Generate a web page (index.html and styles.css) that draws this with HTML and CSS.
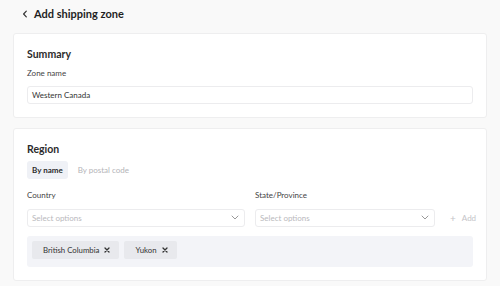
FILE: index.html
```html
<!DOCTYPE html>
<html>
<head>
<meta charset="utf-8">
<link rel="stylesheet" href="styles.css">
</head>
<body>
<div class="page">
  <header class="header">
    <svg class="back" width="6" height="8" viewBox="0 0 6 8"><path d="M4.3 1.2 L1.6 4 L4.3 6.8" fill="none" stroke="#333" stroke-width="1.2" stroke-linecap="round" stroke-linejoin="round"/></svg>
    <h1 class="title">Add shipping zone</h1>
  </header>

  <section class="card">
    <h2 class="card-title">Summary</h2>
    <label class="label">Zone name</label>
    <div class="input">Western Canada</div>
  </section>

  <section class="card">
    <h2 class="card-title">Region</h2>
    <div class="tabs">
      <span class="tab active">By name</span>
      <span class="tab">By postal code</span>
    </div>
    <div class="fields">
      <div class="field">
        <label class="label">Country</label>
        <div class="input select"><span class="placeholder">Select options</span>
          <svg class="chev" width="8" height="5" viewBox="0 0 8 5"><path d="M1 1 L4 4 L7 1" fill="none" stroke="#999" stroke-width="1" stroke-linecap="round" stroke-linejoin="round"/></svg>
        </div>
      </div>
      <div class="field">
        <label class="label">State/Province</label>
        <div class="input select"><span class="placeholder">Select options</span>
          <svg class="chev" width="8" height="5" viewBox="0 0 8 5"><path d="M1 1 L4 4 L7 1" fill="none" stroke="#999" stroke-width="1" stroke-linecap="round" stroke-linejoin="round"/></svg>
        </div>
      </div>
      <div class="add"><span class="plus">+</span>Add</div>
    </div>
    <div class="tags">
      <span class="tag">British Columbia<svg class="x" width="6" height="6" viewBox="0 0 6 6"><path d="M1 1 L5 5 M5 1 L1 5" stroke="#333" stroke-width="1.3" stroke-linecap="round"/></svg></span>
      <span class="tag">Yukon<svg class="x" width="6" height="6" viewBox="0 0 6 6"><path d="M1 1 L5 5 M5 1 L1 5" stroke="#333" stroke-width="1.3" stroke-linecap="round"/></svg></span>
    </div>
  </section>
</div>
</body>
</html>
```
FILE: styles.css
```css
* { box-sizing: border-box; }
html, body { margin: 0; padding: 0; }
body {
  background: #f9f9f9;
  font-family: Lato, "Open Sans", sans-serif;
  color: #333;
  width: 500px;
  height: 286px;
  overflow: hidden;
}
.page { padding: 0 13px; }
.header {
  height: 27px;
  display: flex;
  align-items: center;
  padding-left: 9px;
  gap: 6px;
  margin-bottom: 6px;
}
.back { display: block; }
.title {
  margin: 0;
  font-size: 11px;
  font-weight: 700;
  color: #1f1f1f;
  line-height: 16px;
}
.card {
  background: #fff;
  border: 1px solid #eeeeef;
  border-radius: 3px;
  padding: 13px 13px 13px;
  margin-bottom: 10px;
}
.card-title {
  margin: 0;
  font-size: 10.5px;
  font-weight: 700;
  line-height: 14px;
  color: #2b2b2b;
}
.label {
  display: block;
  font-size: 8px;
  line-height: 12px;
  color: #444;
  margin-top: 6px;
  margin-bottom: 7px;
}
.input {
  height: 18px;
  border: 1px solid #ececee;
  border-radius: 3px;
  padding: 0 4px;
  font-size: 8px;
  line-height: 16px;
  color: #333;
  display: flex;
  align-items: center;
}
.select { justify-content: space-between; padding-right: 5px; }
.placeholder { color: #b9b9bd; }
.chev { display: block; }
.tabs { display: flex; gap: 5px; margin-top: 5px; }
.tab {
  height: 18px;
  padding: 0 5px;
  border-radius: 3px;
  font-size: 8px;
  line-height: 18px;
  color: #b4b4b8;
}
.tab.active { background: #eff1f6; color: #2b2b2b; font-weight: 700; }
.fields {
  display: grid;
  grid-template-columns: 218fr 180fr 28px;
  column-gap: 10px;
  align-items: end;
  margin-top: 4px;
}
.fields .label { margin-top: 6px; margin-bottom: 7.5px; }
.add {
  height: 18px;
  display: flex;
  align-items: center;
  gap: 6px;
  padding-left: 5px;
  font-size: 8px;
  color: #c4c4c8;
  white-space: nowrap;
}
.plus { font-size: 10px; }
.tags {
  margin-top: 9.5px;
  background: #f3f4f8;
  border-radius: 3px;
  padding: 5px;
  display: flex;
  gap: 5px;
  height: 31px;
}
.tag {
  height: 18px;
  background: #e8e9ed;
  border-radius: 2px;
  display: flex;
  align-items: center;
  gap: 5px;
  padding: 0 9px 0 11px;
  font-size: 7.8px;
  color: #333;
}
.x { display: block; }
```
